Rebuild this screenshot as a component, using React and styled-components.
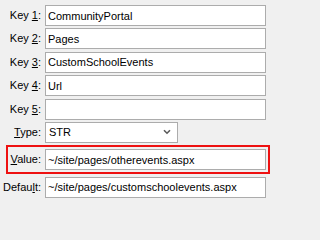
import React from "react";
import styled, { createGlobalStyle } from "styled-components";

const GlobalStyle = createGlobalStyle`
  html, body {
    margin: 0;
    padding: 0;
    background: #f0f0f0;
  }
  body {
    font-family: "Liberation Sans", Arial, sans-serif;
    font-size: 11px;
    color: #000;
  }
`;

const Form = styled.div`
  display: flex;
  flex-direction: column;
  gap: 2.4px;
  padding: 5px 0 0 0;
  width: 271px;
  box-sizing: border-box;
`;

const Row = styled.div`
  display: flex;
  align-items: center;
  margin: ${(p) => (p.$highlight ? "0 1px 0 6px" : "0 5px 0 0")};
  padding: ${(p) => (p.$highlight ? "2px 2px 2px 0" : "0")};
  border: ${(p) => (p.$highlight ? "2px solid #ee1111" : "none")};
`;

const Label = styled.label`
  width: ${(p) => (p.$highlight ? "33px" : "41px")};
  margin-right: 4px;
  flex-shrink: 0;
  text-align: right;
  white-space: nowrap;
  line-height: 21px;

  u {
    text-decoration: underline;
    text-underline-offset: 1px;
  }
`;

const TextBox = styled.input`
  flex: 1;
  min-width: 0;
  height: 21px;
  box-sizing: border-box;
  border: 1px solid #acacac;
  background: #fff;
  padding: 0 2px;
  margin: 0;
  font-family: "Liberation Sans", Arial, sans-serif;
  font-size: 11px;
  color: #000;
  outline: none;
`;

const Dropdown = styled.div`
  width: 133px;
  height: 21px;
  box-sizing: border-box;
  border: 1px solid #acacac;
  background: #fff;
  display: flex;
  align-items: center;
  justify-content: space-between;
  padding: 0 6px 0 3px;
`;

const Chevron = () => (
  <svg width="8" height="6" viewBox="0 0 8 6">
    <path d="M1 1.2 L4 4.2 L7 1.2" fill="none" stroke="#5a5a5a" strokeWidth="1.6" />
  </svg>
);

const keys = ["CommunityPortal", "Pages", "CustomSchoolEvents", "Url", ""];

export default function App() {
  return (
    <>
      <GlobalStyle />
      <Form>
        {keys.map((k, i) => (
          <Row key={i}>
            <Label>
              Key <u>{i + 1}</u>:
            </Label>
            <TextBox defaultValue={k} readOnly />
          </Row>
        ))}
        <Row>
          <Label>
            <u>T</u>ype:
          </Label>
          <Dropdown>
            <span>STR</span>
            <Chevron />
          </Dropdown>
        </Row>
        <Row $highlight>
          <Label $highlight>
            <u>V</u>alue:
          </Label>
          <TextBox defaultValue="~/site/pages/otherevents.aspx" readOnly />
        </Row>
        <Row>
          <Label>
            Defau<u>l</u>t:
          </Label>
          <TextBox defaultValue="~/site/pages/customschoolevents.aspx" readOnly />
        </Row>
      </Form>
    </>
  );
}
